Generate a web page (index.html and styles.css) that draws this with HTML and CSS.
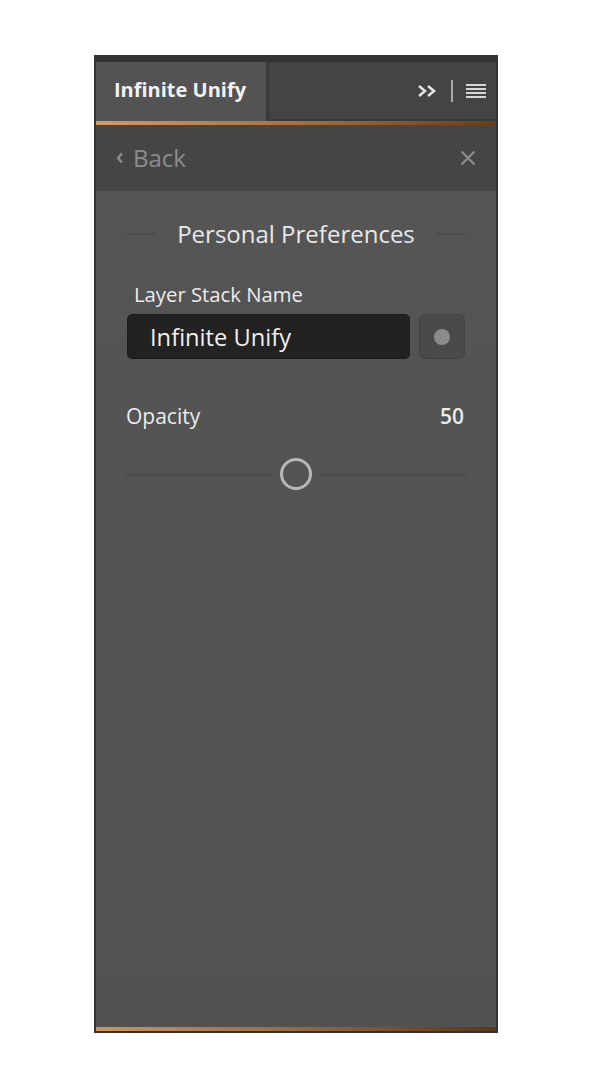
FILE: index.html
```html
<!DOCTYPE html>
<html>
<head>
<meta charset="utf-8">
<link rel="stylesheet" href="styles.css">
</head>
<body>
<div class="panel">
  <div class="header">
    <div class="tab">Infinite Unify</div>
    <div class="header-rest">
      <svg class="ico-chev" width="20" height="14" viewBox="0 0 20 14"><path d="M2 2 L8 7 L2 12 M11 2 L17 7 L11 12" fill="none" stroke="#e2e2e2" stroke-width="2.6"/></svg>
      <span class="sep"></span>
      <svg class="ico-menu" width="20" height="14" viewBox="0 0 20 14"><rect x="0" y="0" width="20" height="2" fill="#d8d8d8"/><rect x="0" y="4" width="20" height="2" fill="#d8d8d8"/><rect x="0" y="8" width="20" height="2" fill="#d8d8d8"/><rect x="0" y="12" width="20" height="2" fill="#d8d8d8"/></svg>
    </div>
  </div>
  <div class="accent"></div>
  <div class="backbar">
    <div class="back"><svg width="8" height="12" viewBox="0 0 8 12"><path d="M6 1.5 L2 6 L6 10.5" fill="none" stroke="#8c8c8c" stroke-width="2.4"/></svg><span>Back</span></div>
    <svg class="close" width="16" height="16" viewBox="0 0 16 16"><path d="M1.5 1.5 L14.5 14.5 M14.5 1.5 L1.5 14.5" stroke="#8c8c8c" stroke-width="2.2"/></svg>
  </div>
  <div class="body">
    <div class="section-title"><span class="rule"></span><span class="title">Personal Preferences</span><span class="rule"></span></div>
    <div class="label">Layer Stack Name</div>
    <div class="name-row">
      <div class="input">Infinite Unify</div>
      <div class="dot-btn"><span class="dot"></span></div>
    </div>
    <div class="opacity-row"><span>Opacity</span><span class="val">50</span></div>
    <div class="slider">
      <span class="track"></span>
      <span class="thumb"></span>
      <span class="track"></span>
    </div>
  </div>
  <div class="accent bottom"></div>
</div>
</body>
</html>
```

FILE: styles.css
```css
html, body {
  margin: 0;
  padding: 0;
  background: #ffffff;
}
body {
  padding: 55px 0 0 94px;
  font-family: "Open Sans", Lato, sans-serif;
}
.panel {
  width: 400px;
  height: 969px;
  border: 2px solid #323232;
  border-top: 7px solid #323232;
  display: flex;
  flex-direction: column;
  background: #535353;
}
.header {
  height: 59px;
  display: flex;
  background: #444444;
}
.tab {
  width: 170px;
  background: #535353;
  color: #f2f2f2;
  font-weight: 700;
  font-size: 20px;
  line-height: 24px;
  display: flex;
  align-items: center;
  padding-left: 18px;
  padding-bottom: 3px;
  box-sizing: border-box;
}
.header-rest {
  flex: 1;
  border-left: 3px solid #3a3a3a;
  border-bottom: 2px solid #3a3a3a;
  display: flex;
  align-items: center;
  justify-content: flex-end;
  padding-right: 10px;
  padding-top: 1px;
}
.ico-chev { margin-right: 14px; }
.sep {
  width: 2px;
  height: 22px;
  background: #a9a9a9;
  margin-right: 13px;
}
.accent {
  height: 4px;
  background: linear-gradient(to right, #d49a64, #a8703f 50%, #6a3d17);
}
.accent.bottom {
  background: linear-gradient(to right, #cd955f, #9a6a3e 50%, #5e3515);
}
.backbar {
  height: 66px;
  background: #454545;
  display: flex;
  align-items: center;
  justify-content: space-between;
  padding: 0 20px 0 20px;
}
.back {
  display: flex;
  align-items: center;
  gap: 9px;
  color: #8c8c8c;
  font-size: 24px;
  line-height: 28px;
}
.body {
  flex: 1;
  background: linear-gradient(to bottom, #555555, #515151);
  padding: 0 30px;
  display: flex;
  flex-direction: column;
}
.section-title {
  display: flex;
  align-items: center;
  margin-top: 28px;
  height: 30px;
}
.rule {
  width: 30px;
  height: 2px;
  background: #4c4c4c;
}
.title {
  flex: 1;
  text-align: center;
  color: #e8e8e8;
  font-size: 24px;
  line-height: 30px;
}
.label {
  margin-top: 33px;
  margin-left: 8px;
  color: #ececec;
  font-size: 20.3px;
  line-height: 24px;
}
.name-row {
  display: flex;
  margin-top: 8px;
  margin-left: 1px;
  gap: 9px;
}
.input {
  width: 283px;
  height: 45px;
  box-sizing: border-box;
  background: #222222;
  border: 1px solid #1c1c1c;
  border-radius: 5px;
  color: #f0f0f0;
  font-size: 23.7px;
  line-height: 28px;
  display: flex;
  align-items: center;
  padding-left: 22px;
}
.dot-btn {
  width: 46px;
  height: 45px;
  box-sizing: border-box;
  background: #4a4a4a;
  border: 1px solid #444;
  border-radius: 6px;
  display: flex;
  align-items: center;
  justify-content: center;
}
.dot {
  width: 16px;
  height: 16px;
  border-radius: 50%;
  background: #8a8a8a;
}
.opacity-row {
  display: flex;
  justify-content: space-between;
  margin-top: 44px;
  color: #ececec;
  font-size: 21px;
  line-height: 26px;
  padding-right: 2px;
}
.val { font-weight: 600; }
.slider {
  display: flex;
  align-items: center;
  margin-top: 29px;
  gap: 8px;
}
.track {
  flex: 1;
  height: 3px;
  background: #4b4b4b;
}
.thumb {
  width: 26px;
  height: 26px;
  border: 3px solid #b8b8b8;
  border-radius: 50%;
}
```
